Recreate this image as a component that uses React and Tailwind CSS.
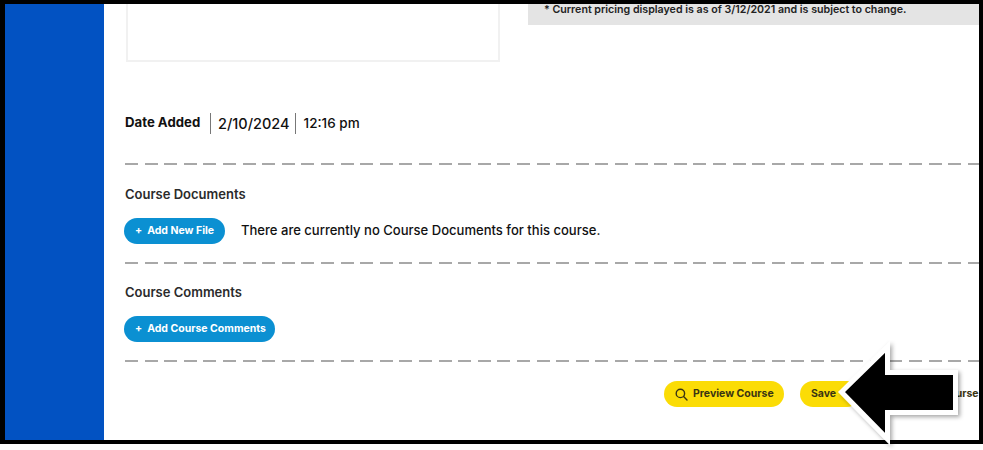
const Divider = () => (
  <div className="h-[2px] bg-[repeating-linear-gradient(90deg,#a8a8a8_0,#a8a8a8_13px,transparent_13px,transparent_19.6px)]" />
);

const BlueButton = ({ children, className }) => (
  <button className={`flex h-[26px] items-center rounded-full bg-[#0b90d2] pl-[11px] text-[10.5px] font-bold whitespace-nowrap text-white ${className}`}>
    <span className="mr-[5px]">+</span>
    {children}
  </button>
);

const SearchIcon = () => (
  <svg width="13" height="13" viewBox="0 0 13 13" fill="none" stroke="#3a3413" strokeWidth="1.4" strokeLinecap="round">
    <circle cx="5.4" cy="5.4" r="4.2" />
    <path d="M8.6 8.6 12 12" />
  </svg>
);

const App = () => {
  return (
    <div className="relative h-[450px] w-[983px] overflow-hidden bg-white font-['Inter','Liberation_Sans',sans-serif]">
      <div className="flex h-[444px] border-4 border-l-[5px] border-black">
        {/* Sidebar */}
        <div className="w-[99px] shrink-0 bg-[#0252c2]" />

        {/* Main */}
        <div className="min-w-0 flex-1 overflow-hidden">
          <div className="flex h-[58px] items-start pl-[22px]">
            <div className="h-[58px] w-[374px] border-x-2 border-b-2 border-[#f1f1f1]" />
            <div className="ml-[28px] flex h-[21px] flex-1 items-start bg-[#e4e4e4] pl-[16px] text-[10.65px] font-semibold leading-[11px] whitespace-nowrap text-[#222]">
              * Current pricing displayed is as of 3/12/2021 and is subject to change.
            </div>
          </div>

          <div className="ml-[21px] mt-[50px] flex h-[22px] items-center text-[#111]">
            <span className="w-[85px] text-[13.2px] font-bold whitespace-nowrap">Date Added</span>
            <span className="h-[21px] border-l border-[#777] pl-[7px] text-[14.5px] leading-[21px] font-medium">2/10/2024</span>
            <span className="ml-[5px] h-[21px] border-l border-[#777] pl-[8px] text-[13.5px] leading-[21px] font-medium">12:16 pm</span>
          </div>

          <div className="ml-[21px] mt-[29px]"><Divider /></div>

          <div className="ml-[21px]">
            <h2 className="mt-[21px] text-[13px] leading-[16px] font-semibold text-[#2b2b2b]">Course Documents</h2>
            <div className="mt-[16px] flex items-center">
              <BlueButton className="w-[101px] -ml-px">Add New File</BlueButton>
              <p className="ml-[16px] text-[13.05px] font-medium text-[#111]">There are currently no Course Documents for this course.</p>
            </div>
            <div className="mt-[18px]"><Divider /></div>

            <h2 className="mt-[20px] text-[13px] leading-[16px] font-semibold text-[#2b2b2b]">Course Comments</h2>
            <div className="mt-[16px]">
              <BlueButton className="w-[151px] -ml-px">Add Course Comments</BlueButton>
            </div>
            <div className="mt-[18px]"><Divider /></div>

            <div className="mt-[19px] flex items-center">
              <button className="ml-[539px] flex h-[26px] w-[120px] items-center gap-[5px] rounded-full bg-[#fbdc06] pl-[11px] text-[10.5px] font-bold whitespace-nowrap text-[#3a3413]">
                <SearchIcon />
                Preview Course
              </button>
              <button className="ml-[16px] h-[26px] w-[60px] rounded-full bg-[#fbdc06] pr-[13px] text-[10.5px] font-bold text-[#3a3413]">Save</button>
              <span className="ml-[46px] text-[10.5px] font-bold whitespace-nowrap text-[#3a3413]">Delete Course</span>
            </div>
          </div>
        </div>
      </div>

      {/* Callout arrow */}
      <svg className="absolute left-[835px] top-[340px]" width="135" height="110" viewBox="0 0 135 110">
        <defs>
          <filter id="arrowShadow" x="-10%" y="-10%" width="125%" height="125%">
            <feDropShadow dx="2" dy="2" stdDeviation="2" floodColor="#000" floodOpacity="0.35" />
          </filter>
        </defs>
        <path d="M6.5 52 L52.5 7 V32.5 H120.5 V72.5 H52.5 V99 Z" fill="#000" stroke="#fff" strokeWidth="5" strokeLinejoin="miter" filter="url(#arrowShadow)" />
      </svg>
    </div>
  );
};

export default App;
